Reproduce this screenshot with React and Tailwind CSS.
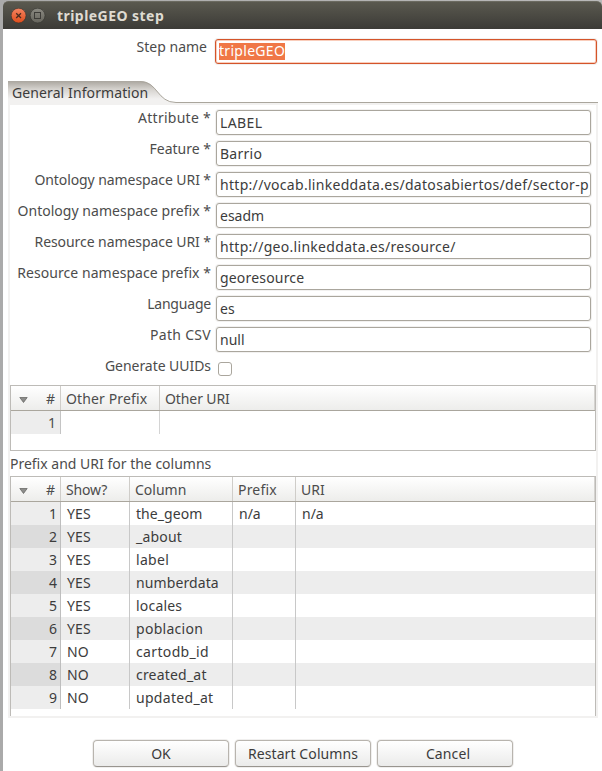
import React from "react";

const FIELDS = [
  ["Attribute *", "LABEL", "tracking-[0.27px]", "tracking-[0.4px]"],
  ["Feature *", "Barrio", "", "tracking-[0.25px]"],
  ["Ontology namespace URI *", "http://vocab.linkeddata.es/datosabiertos/def/sector-p", "tracking-[-0.08px]", "tracking-[0.3px]"],
  ["Ontology namespace prefix *", "esadm", "tracking-[0.03px]", ""],
  ["Resource namespace URI *", "http://geo.linkeddata.es/resource/", "tracking-[-0.07px]", "tracking-[0.3px]"],
  ["Resource namespace prefix *", "georesource", "tracking-[0.05px]", "tracking-[0.18px]"],
  ["Language", "es", "tracking-[-0.2px]", ""],
  ["Path CSV", "null", "tracking-[0.3px]", ""],
];

const ROWS = [
  ["YES", "the_geom", "n/a", "n/a", "tracking-[0.06px]"],
  ["YES", "_about", "", "", "tracking-[0.2px]"],
  ["YES", "label", "", "", "tracking-[0.3px]"],
  ["YES", "numberdata", "", "", "tracking-[0.1px]"],
  ["YES", "locales", "", "", "tracking-[0.2px]"],
  ["YES", "poblacion", "", "", "tracking-[0.28px]"],
  ["NO", "cartodb_id", "", "", "tracking-[0.35px]"],
  ["NO", "created_at", "", "", "tracking-[0.2px]"],
  ["NO", "updated_at", "", "", "tracking-[0.3px]"],
];

function TitleBar() {
  return (
    <header className="flex h-[28px] shrink-0 items-center rounded-t-[5px] border-t border-[#6b6a60] bg-linear-to-b from-[#5a594f] to-[#3c3b37] pl-[8px]">
      <svg width="36" height="16" viewBox="0 0 36 16" className="shrink-0">
        <defs>
          <linearGradient id="close" x2="0" y2="1">
            <stop offset="0" stopColor="#f58461" />
            <stop offset="1" stopColor="#de4c1b" />
          </linearGradient>
          <linearGradient id="max" x2="0" y2="1">
            <stop offset="0" stopColor="#8b8a82" />
            <stop offset="1" stopColor="#65645c" />
          </linearGradient>
        </defs>
        <circle cx="7.6" cy="7.6" r="7.4" fill="url(#close)" stroke="#33322e" strokeWidth="0.6" />
        <path d="M5.200 5.200l4.800 4.800M10 5.200L5.200 10" stroke="#4b2b1f" strokeWidth="1.3" />
        <circle cx="26.6" cy="7.6" r="7.4" fill="url(#max)" stroke="#33322e" strokeWidth="0.6" />
        <rect x="23.5" y="4.5" width="6" height="6" fill="none" stroke="#3c3b37" />
      </svg>
      <h1 className="ml-[10px] text-[14px] font-bold leading-none tracking-[0.45px] text-[#dfdbd2]">tripleGEO step</h1>
    </header>
  );
}

function Tab() {
  return (
    <div className="relative h-[24px] shrink-0">
      <svg width="590" height="24" viewBox="0 0 590 24" className="block">
        <defs>
          <linearGradient id="tab" x2="0" y2="1">
            <stop offset="0" stopColor="#aaa69f" />
            <stop offset="0.35" stopColor="#d6d3cf" />
            <stop offset="0.75" stopColor="#f2f1f0" />
          </linearGradient>
        </defs>
        <path d="M0 0H132C150 0 149 21.500 168 21.500V24H0Z" fill="url(#tab)" />
        <path d="M0 22H590V24H0Z" fill="#f2f1f0" />
        <path d="M132 0.500C150 0.500 149 21.500 168 21.500H590" fill="none" stroke="#aaa69d" />
      </svg>
      <span className="absolute left-[4px] top-[2px] leading-[20px] tracking-[0.1px] text-[#3c3c3c]">General Information</span>
    </div>
  );
}

function HeadCell({ className, children }) {
  return <div className={"border-r border-[#cfcdc9] pl-[5px] " + className}>{children}</div>;
}

function NumberHead() {
  return (
    <div className="flex w-[50px] items-center justify-between border-r border-[#cfcdc9] pl-[8px] pr-[5px]">
      <svg width="9" height="6" viewBox="0 0 9 6" className="mt-[3px]">
        <path d="M0.800 0.500H8.200L4.500 5.500Z" fill="#8d8d8b" stroke="#5e5e5c" strokeWidth="0.700" />
      </svg>
      <span>#</span>
    </div>
  );
}

function TableHead({ children }) {
  return (
    <div className="flex h-[25px] border-b border-[#aaa69d] bg-linear-to-b from-white to-[#ededeb] leading-[25px]">
      {children}
      <div className="flex-1 border-r border-[#d5d3d0]" />
    </div>
  );
}

function Button({ className = "", children }) {
  return (
    <button
      className={
        "h-[27px] w-[136px] rounded-[4px] border border-[#b8b4ae] border-b-[#99958f] bg-linear-to-b from-white to-[#ebebea] leading-[25px] text-[#3c3c3c] shadow-[0_0_0_1px_#f0efee] " +
        className
      }
    >
      {children}
    </button>
  );
}

export default function App() {
  return (
    <div className="flex h-[771px] w-[602px] overflow-hidden bg-linear-to-r from-[#aaaaaa] to-[#b9b9b9] pl-[3px] pt-px font-['Noto_Sans','Open_Sans',sans-serif] text-[14px] text-[#4c4c4c]">
      <div className="flex w-[599px] flex-col rounded-t-[5px] bg-white">
        <TitleBar />

        <div className="flex h-[52px] shrink-0 pt-[10px]">
          <span className="w-[204px] text-right leading-[15px]">Step name</span>
          <div className="ml-[8px] flex h-[25px] w-[382px] items-center rounded-[3px] border border-[#d4542a] bg-white pl-[3px] shadow-[inset_0_0_0_1px_#f9cdbb,0_0_0_1px_#f2f1f0]">
            <span className="h-[17px] bg-[#f07746] leading-[16px] tracking-[0.3px] text-white">tripleGEO</span>
          </div>
        </div>

        <div className="ml-[5px] flex w-[590px] flex-col">
          <Tab />
          <div className="flex h-[613px] flex-col border-x-2 border-b-2 border-[#f2f1f0]">
            <div className="flex flex-col gap-[6px] pt-[5px]">
              {FIELDS.map(([label, value, labelTracking, valueTracking]) => (
                <div key={label} className="flex h-[25px]">
                  <span className={"w-[201px] whitespace-nowrap text-right leading-[15px] " + labelTracking}>{label}</span>
                  <div className="ml-[5px] w-[375px] rounded-[3px] border border-[#aaa69d] bg-white pl-[3px] pr-px leading-[23px] text-[#3c3c3c] shadow-[0_0_0_1px_#f2f1f0]">
                    <div className={"overflow-hidden whitespace-nowrap " + valueTracking}>{value}</div>
                  </div>
                </div>
              ))}
              <div className="flex h-[21px]">
                <span className="w-[201px] text-right leading-[15px] tracking-[-0.05px]">Generate UUIDs</span>
                <span className="ml-[7px] mt-[4px] size-[14px] rounded-[3px] border border-[#aaa69d] bg-white" />
              </div>
            </div>

            <div className="mt-[6px] h-[66px] shrink-0 border border-[#bdbbb7]">
              <TableHead>
                <NumberHead />
                <HeadCell className="w-[99px] tracking-[0.13px]">Other Prefix</HeadCell>
                <div className="pl-[5px] tracking-[-0.1px]">Other URI</div>
              </TableHead>
              <div className="flex h-[23px] leading-[24px]">
                <div className="w-[50px] border-r border-[#c4c4c4] bg-[#ededed] pr-[4px] text-right">1</div>
                <div className="w-[99px] border-r border-[#d4d4d4]" />
              </div>
            </div>

            <div className="h-[25px] shrink-0 leading-[26px]">Prefix and URI for the columns</div>

            <div className="flex-1 border border-b-0 border-[#bdbbb7]">
              <TableHead>
                <NumberHead />
                <HeadCell className="w-[69px] tracking-[-0.15px]">Show?</HeadCell>
                <HeadCell className="w-[103px]">Column</HeadCell>
                <HeadCell className="w-[63px] tracking-[0.2px]">Prefix</HeadCell>
                <div className="pl-[5px]">URI</div>
              </TableHead>
              {ROWS.map((row, i) => (
                <div
                  key={row[1]}
                  className={"flex h-[23px] leading-[23px] text-[#3c3c3c] " + (i % 2 ? "bg-[#ededed]" : "bg-white")}
                >
                  <div
                    className={"w-[50px] border-r border-[#bebebe] pr-[3px] text-right " + (i % 2 ? "bg-[#dcdcdc]" : "bg-[#ededed]")}
                  >
                    {i + 1}
                  </div>
                  <div className="w-[69px] border-r border-[#c8c8c8] pl-[6px] tracking-[0.2px]">{row[0]}</div>
                  <div className={"w-[103px] border-r border-[#c8c8c8] pl-[6px] " + row[4]}>{row[1]}</div>
                  <div className="w-[63px] border-r border-[#c8c8c8] pl-[6px]">{row[2]}</div>
                  <div className="pl-[6px]">{row[3]}</div>
                </div>
              ))}
            </div>
          </div>
        </div>

        <div className="ml-[90px] mt-[22px] flex gap-[6px]">
          <Button>OK</Button>
          <Button className="tracking-[0.1px]">Restart Columns</Button>
          <Button className="pl-[6px] tracking-[0.1px]">Cancel</Button>
        </div>
      </div>
    </div>
  );
}
